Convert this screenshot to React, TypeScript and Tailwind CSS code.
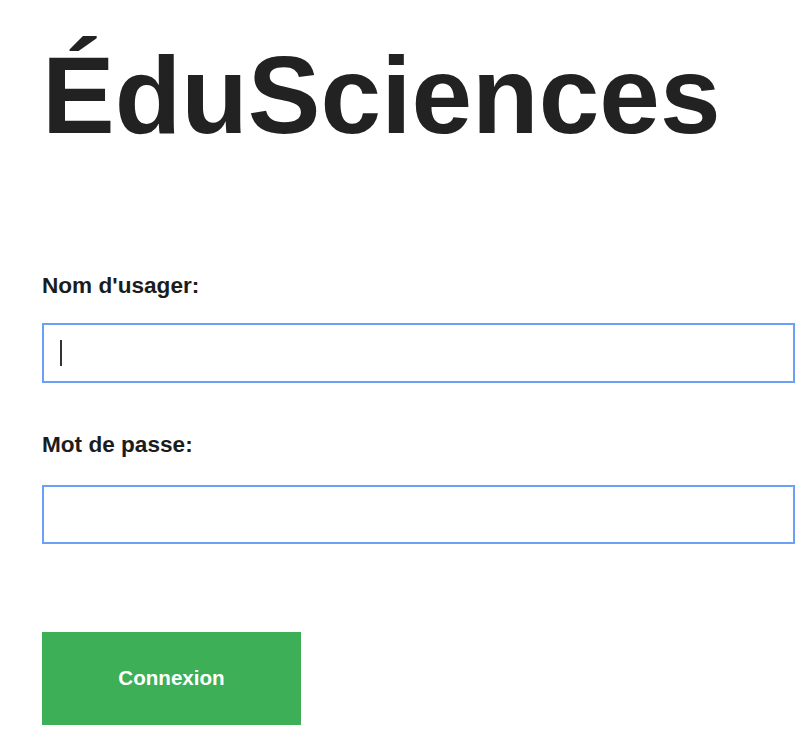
import React from "react";

export default function App() {
  return (
    <div
      className="min-h-screen w-full bg-white pl-[42px] pt-[41px]"
      style={{ fontFamily: '"Liberation Sans", Arial, sans-serif' }}
    >
      <h1 className="text-[109px] font-bold leading-none text-[#222222]">ÉduSciences</h1>

      <label className="mt-[123px] block text-[22.6px] font-bold leading-[26px] text-[#1c1c1c]">
        Nom d'usager:
      </label>
      <div className="mt-[24px] flex h-[60px] w-[753px] items-center border-2 border-[#6ba0f6] bg-white pl-[16px]">
        <div className="h-[26px] w-[2px] bg-[#333333]" />
      </div>

      <label className="mt-[49px] block text-[22.6px] font-bold leading-[26px] text-[#1c1c1c]">
        Mot de passe:
      </label>
      <div className="mt-[27px] h-[59px] w-[753px] border-2 border-[#6ba0f6] bg-white" />

      <button className="mt-[88px] flex h-[93px] w-[259px] items-center justify-center bg-[#3daf56] text-[20.6px] font-bold text-white">
        Connexion
      </button>
    </div>
  );
}
